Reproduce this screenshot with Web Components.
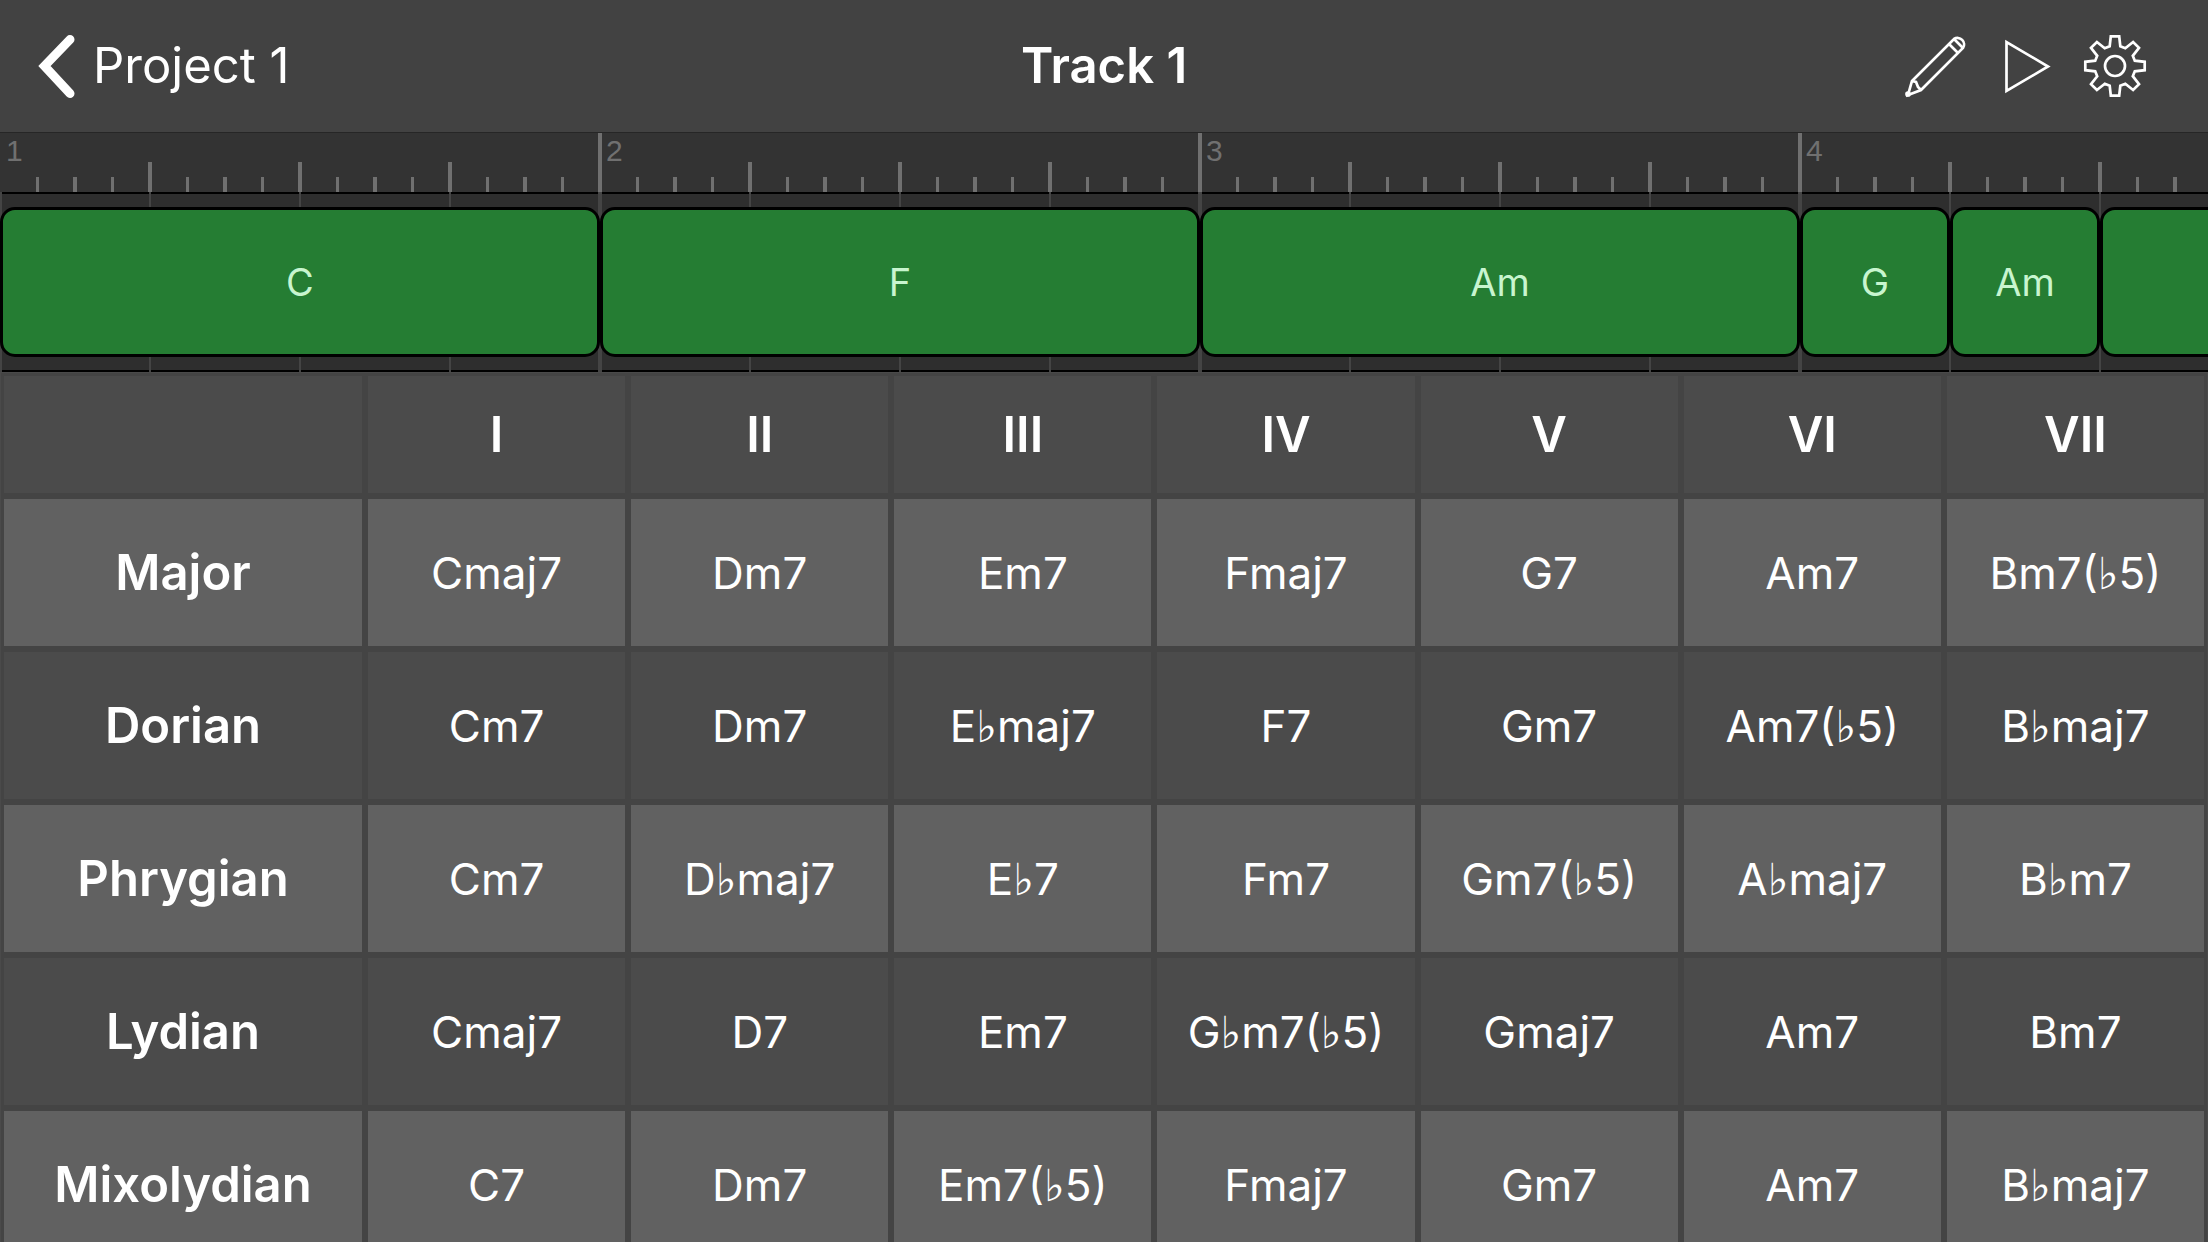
<!DOCTYPE html>
<html lang="en">
<head>
<meta charset="utf-8">
<meta name="viewport" content="width=device-width, initial-scale=1">
<title>Track 1</title>
<style>
    html, body {
        margin: 0;
        height: 100%;
        background: #4a4a4a;
    }

    body {
        display: flex;
        flex-direction: column;
        overflow: hidden;
        font-family: Inter, "Liberation Sans", "DejaVu Sans", sans-serif;
        color: #fff;
    }
</style>
</head>
<body>
<nav-bar back="Project 1" heading="Track 1">
    <icon-button icon="pencil" label="Edit"></icon-button>
    <icon-button icon="play" label="Play"></icon-button>
    <icon-button icon="gear" label="Settings"></icon-button>
</nav-bar>
<time-ruler>
    <ruler-bar>1</ruler-bar>
    <ruler-bar>2</ruler-bar>
    <ruler-bar>3</ruler-bar>
    <ruler-bar>4</ruler-bar>
</time-ruler>
<chord-lane>
    <chord-block beats="4">C</chord-block>
    <chord-block beats="4">F</chord-block>
    <chord-block beats="4">Am</chord-block>
    <chord-block beats="1">G</chord-block>
    <chord-block beats="1">Am</chord-block>
    <chord-block beats="2"></chord-block>
</chord-lane>
<scale-table></scale-table>

<script>
function attach(el, html) {
    el.attachShadow({ mode: 'open' });
    el.shadowRoot.innerHTML = html;
}

const icons = {
    pencil: `
        <path d="M7 47 L49 5 A6.5 6.5 0 0 1 58 14 L16 56 L3 61 Z"/>
        <path d="M7 47 L11 48 L13 53 L16 56 M44 10 L53 19 M49 5 L58 14"/>
        <circle cx="3" cy="60" r="1.5" fill="currentColor"/>`,
    play: '<path d="M12.5 8 V57 L54 32.5 Z"/>',
    gear: ''
};

// eight teeth, each one an outer edge and a valley point between
function gearPath() {
    const points = [];
    for (let i = 0; i < 8; i++) {
        [[-8, 30], [8, 30]].forEach(([deg, r], n) => {
            const a = (i * 45 + deg) * Math.PI / 180;
            const b = (i * 45 + (n ? 15 : -15)) * Math.PI / 180;
            const outer = [32 + r * Math.sin(a), 32 - r * Math.cos(a)];
            const inner = [32 + 20.5 * Math.sin(b), 32 - 20.5 * Math.cos(b)];
            points.push(...(n ? [outer, inner] : [inner, outer]));
        });
    }
    return 'M' + points.map(p => p.map(v => v.toFixed(1)).join(' ')).join(' L') + ' Z';
}
icons.gear = `<path d="${gearPath()}"/><circle cx="32" cy="32" r="10"/>`;

class IconButton extends HTMLElement {
    constructor() {
        super();
        attach(this, `
<style>
    :host {
        display: block;
    }

    button {
        display: block;
        padding: 0;
        border: 0;
        background: none;
        color: inherit;
    }

    svg {
        display: block;
        width: 64px;
        height: 64px;
        fill: none;
        stroke: currentColor;
        stroke-width: 2.7;
    }
</style>
<button type="button" aria-label="${this.getAttribute('label')}">
    <svg viewBox="0 0 64 64">${icons[this.getAttribute('icon')]}</svg>
</button>`);
    }
}

class NavBar extends HTMLElement {
    constructor() {
        super();
        attach(this, `
<style>
    :host {
        display: grid;
        grid-template-columns: 1fr auto 1fr;
        align-items: center;
        height: 132px;
        flex: none;
        padding: 0 38px;
        background: #424242;
        border-bottom: 1px solid #262626;
        box-sizing: content-box;
    }

    a {
        display: flex;
        align-items: center;
        gap: 17px;
        color: inherit;
        text-decoration: none;
        font-size: 49px;
        line-height: 60px;
    }

    svg {
        width: 38px;
        height: 64px;
        fill: none;
        stroke: currentColor;
        stroke-width: 9;
        stroke-linecap: round;
        stroke-linejoin: miter;
    }

    h1 {
        margin: 0;
        font-size: 49px;
        line-height: 60px;
        font-weight: 600;
    }

    nav {
        display: flex;
        justify-content: flex-end;
        gap: 25px;
        padding-right: 23px;
    }
</style>
<a href="#">
    <svg viewBox="0 0 38 64"><path d="M32 5.5 L6.5 32 L32 59.5"/></svg>
    ${this.getAttribute('back')}
</a>
<h1>${this.getAttribute('heading')}</h1>
<nav><slot></slot></nav>`);
    }
}

class TimeRuler extends HTMLElement {
    constructor() {
        super();
        attach(this, `
<style>
    :host {
        display: flex;
        flex: none;
        height: 59px;
        overflow: hidden;
        background: #333;
        color: #707070;
    }

    /* bar lines are 4px wide, centred on the bar start */
    ::slotted(:first-child) {
        margin-left: -2px;
        border-color: transparent !important;
    }
</style>
<slot></slot>`);
    }
}

class RulerBar extends HTMLElement {
    constructor() {
        super();
        attach(this, `
<style>
    :host {
        display: block;
        box-sizing: border-box;
        flex: none;
        width: 600px;
        padding: 3px 0 0 4px;
        border-left: 4px solid #707070;
        font: 30px/30px "Liberation Sans", sans-serif;
        background:
            linear-gradient(90deg, #707070 4px, transparent 4px) 0 100% / 150px 30px repeat-x border-box,
            linear-gradient(90deg, transparent 38px,
                #707070 38px 41px, transparent 41px 75px,
                #707070 75px 79px, transparent 79px 113px,
                #707070 113px 116px, transparent 116px) 0 100% / 150px 15px repeat-x border-box;
        background-clip: padding-box;
    }
</style>
<slot></slot>`);
    }
}

class ChordLane extends HTMLElement {
    constructor() {
        super();
        attach(this, `
<style>
    :host {
        display: flex;
        flex: none;
        box-sizing: border-box;
        height: 180px;
        padding: 15px 0;
        overflow: hidden;
        background:
            linear-gradient(90deg, #444 4px, transparent 4px) -2px 0 / 600px 100%,
            linear-gradient(90deg, #444 2px, transparent 2px) -1px 0 / 150px 100%,
            linear-gradient(#000 2px, transparent 2px calc(100% - 2px), #000 calc(100% - 2px)),
            #2e2e2e;
    }
</style>
<slot></slot>`);
    }
}

class ChordBlock extends HTMLElement {
    constructor() {
        super();
        attach(this, `
<style>
    :host {
        display: flex;
        flex: none;
        width: ${this.getAttribute('beats') * 150}px;
    }

    button {
        flex: 1;
        padding: 0;
        border: 3px solid #000;
        border-radius: 15px;
        background: #257d33;
        color: #c8f5cf;
        font: inherit;
        font-size: 38px;
        line-height: 46px;
    }
</style>
<button type="button"><slot></slot></button>`);
    }
}

const degrees = ['I', 'II', 'III', 'IV', 'V', 'VI', 'VII'];
const scales = [
    ['Major', 'Cmaj7', 'Dm7', 'Em7', 'Fmaj7', 'G7', 'Am7', 'Bm7(♭5)'],
    ['Dorian', 'Cm7', 'Dm7', 'E♭maj7', 'F7', 'Gm7', 'Am7(♭5)', 'B♭maj7'],
    ['Phrygian', 'Cm7', 'D♭maj7', 'E♭7', 'Fm7', 'Gm7(♭5)', 'A♭maj7', 'B♭m7'],
    ['Lydian', 'Cmaj7', 'D7', 'Em7', 'G♭m7(♭5)', 'Gmaj7', 'Am7', 'Bm7'],
    ['Mixolydian', 'C7', 'Dm7', 'Em7(♭5)', 'Fmaj7', 'Gm7', 'Am7', 'B♭maj7']
];

class ScaleTable extends HTMLElement {
    constructor() {
        super();
        const rows = scales.map(([name, ...chords]) =>
            `<tr><th scope="row">${name}</th>${chords.map(c => `<td>${c}</td>`).join('')}</tr>`);
        attach(this, `
<style>
    :host {
        display: block;
        flex: 1;
        min-height: 0;
        padding: 1px;
        overflow: hidden;
    }

    table {
        width: 100%;
        table-layout: fixed;
        border-spacing: 0;
        font-size: 44px;
        line-height: 54px;
        text-align: center;
    }

    th, td {
        box-sizing: border-box;
        height: 153px;
        padding: 0;
        border: 3px solid #444;
        background: #4b4b4b;
    }

    thead th, thead td {
        height: 123px;
    }

    th {
        font-size: 49px;
        font-weight: 600;
    }

    .corner {
        width: 364px;
    }

    tbody tr:nth-child(odd) > * {
        background: #616161;
    }
</style>
<table>
    <thead>
        <tr><td class="corner"></td>${degrees.map(d => `<th scope="col">${d}</th>`).join('')}</tr>
    </thead>
    <tbody>${rows.join('')}</tbody>
</table>`);
    }
}

customElements.define('icon-button', IconButton);
customElements.define('nav-bar', NavBar);
customElements.define('time-ruler', TimeRuler);
customElements.define('ruler-bar', RulerBar);
customElements.define('chord-lane', ChordLane);
customElements.define('chord-block', ChordBlock);
customElements.define('scale-table', ScaleTable);
</script>
</body>
</html>
